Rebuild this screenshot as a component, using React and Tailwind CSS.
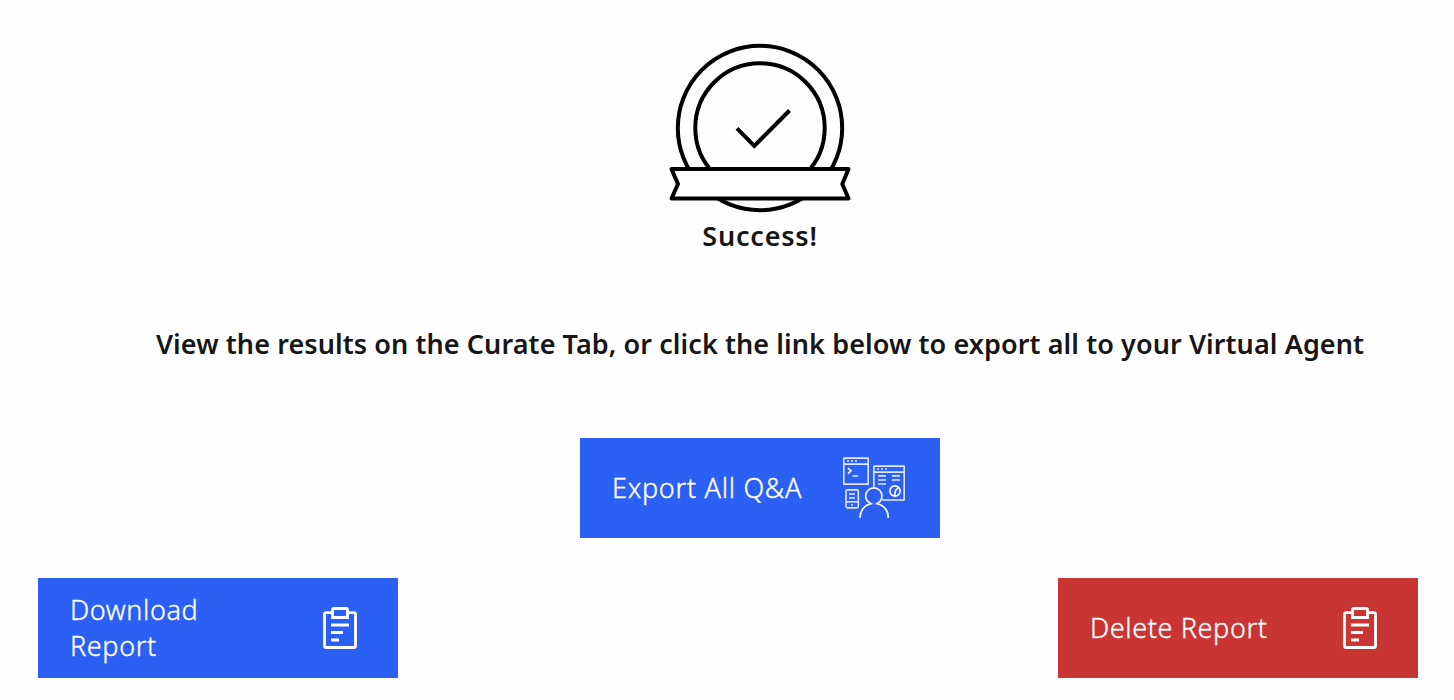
function SuccessBadge() {
  return (
    <svg className="h-[180px] w-[200px]" viewBox="0 0 200 180" fill="none" stroke="#000" strokeWidth="4">
      <circle cx="100" cy="93" r="82.2" />
      <circle cx="100" cy="93" r="64.7" />
      <path d="M11.5 134H188.5L182.3 149L188.5 163.5H11.5L18 149Z" fill="#fff" strokeLinejoin="round" />
      <path d="M77 93.3L94.3 110.8L129.5 75.5" />
    </svg>
  );
}

function AgentIcon() {
  return (
    <svg className="h-[66px] w-[66px] shrink-0" viewBox="33 30 198 198" fill="none" stroke="#fff" strokeWidth="4.8">
      <g strokeLinejoin="round" opacity=".85">
        <path d="M41.500 39.500H114.500V117.500H41.500ZM41.500 57.500H114.500" />
        <path d="M131.500 129V63.500H222.500V165H157M131.500 81.500H222.500" />
        <rect x="48" y="134.500" width="37" height="54" rx="4" />
        <path d="M48 170.500H85" />
      </g>
      <path d="M51 48H57M63 48H69M75 48H81M141 72H147M153 72H159M165 72H171M63 180H69" strokeWidth="6" opacity=".65" />
      <path d="M67 93H84M144 92.500H168M144 105H168M144 117H168M186 92.500H210M186 105H210M57 147H75M57 159H75" strokeWidth="5" opacity=".85" />
      <path d="M54 69L63 77.500L54 86" />
      <circle cx="195" cy="138" r="15.500" />
      <path d="M195 153V143Q195 138 199 134L205 127" />
      <path d="M90 219C90 198 102 180 123 176C113 171 107 164 107 153A24.500 24.500 0 0 1 156 153C156 164 150 171 141 176C163 180 175 198 175 219" />
    </svg>
  );
}

function ClipboardIcon() {
  return (
    <svg className="h-[46px] w-10 shrink-0" viewBox="30 30 120 138" fill="none" stroke="#fff" strokeWidth="8.500">
      <path d="M67 53H48Q43.500 53 43.500 58V153Q43.500 157.500 48 157.500H132Q136.500 157.500 136.500 153V58Q136.500 53 132 53H113" />
      <path d="M67.500 67.500V44Q67.500 40.500 71 40.500H109Q112.500 40.500 112.500 44V67.500Z" />
      <path d="M63 90H117M63 112.500H99M63 135H87" />
    </svg>
  );
}

export default function App() {
  return (
    <main className="flex h-[700px] flex-col bg-[#fefefe] pr-9 pl-[38px] pt-[35px] font-['Noto_Sans','Open_Sans',sans-serif] text-[27px] leading-9 text-[#161616]">
      <section className="flex flex-col items-center pl-16">
        <SuccessBadge />
        <h1 className="mt-[3px] font-semibold tracking-[0.8px]">Success!</h1>
      </section>
      <h2 className="mt-[72px] ml-[118px] whitespace-nowrap font-semibold tracking-[0.087px]">
        View the results on the Curate Tab, or click the link below to export all to your Virtual Agent
      </h2>
      <button className="mt-[76px] ml-[542px] flex h-[100px] w-[360px] shrink-0 items-center justify-between bg-[#2c60f4] pr-[33px] pl-8 text-left text-white">
        <span className="font-light tracking-[0.72px] [-webkit-text-stroke:0.35px_white]">Export All Q&amp;A</span>
        <AgentIcon />
      </button>
      <div className="mt-10 flex justify-between">
        <button className="flex h-[100px] w-[360px] items-center justify-between bg-[#2c60f4] pr-[38px] pl-8 text-left text-white">
          <span className="font-light tracking-[0.62px] [-webkit-text-stroke:0.35px_white]">Download<br />Report</span>
          <ClipboardIcon />
        </button>
        <button className="flex h-[100px] w-[360px] items-center justify-between bg-[#c83532] pr-[38px] pl-8 text-left text-white">
          <span className="font-light tracking-[0.62px] [-webkit-text-stroke:0.35px_white]">Delete Report</span>
          <ClipboardIcon />
        </button>
      </div>
    </main>
  );
}
